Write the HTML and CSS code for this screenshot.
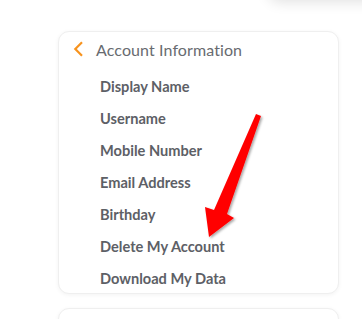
FILE: index.html
```html
<!DOCTYPE html>
<html>
<head>
<meta charset="utf-8">
<link rel="stylesheet" href="styles.css">
</head>
<body>
<div class="menu-shadow"></div>
<main class="page">
  <section class="card">
    <div class="card-head">
      <svg class="chev" width="11" height="16" viewBox="0 0 11 16"><path d="M9 1.3 L2.3 8 L9 14.7" fill="none" stroke="#f7931e" stroke-width="2.2"/></svg>
      <span class="title">Account Information</span>
    </div>
    <ul class="items">
      <li>Display Name</li>
      <li>Username</li>
      <li>Mobile Number</li>
      <li>Email Address</li>
      <li>Birthday</li>
      <li>Delete My Account</li>
      <li>Download My Data</li>
    </ul>
  </section>
  <section class="card card-next"></section>
</main>
<svg class="arrow" width="362" height="319" viewBox="0 0 362 319">
  <defs>
    <filter id="sh" x="-20%" y="-20%" width="140%" height="140%">
      <feDropShadow dx="1.5" dy="1.5" stdDeviation="1.2" flood-color="#000" flood-opacity="0.35"/>
    </filter>
  </defs>
  <polygon points="256,114 261,116 227,214 234,218 209,237 205,207 214,210" fill="#ff0000" filter="url(#sh)"/>
</svg>
</body>
</html>
```
FILE: styles.css
```css
html, body {
  margin: 0;
  padding: 0;
  background: #ffffff;
  overflow: hidden;
  width: 362px;
  height: 319px;
}
body {
  font-family: Lato, "Open Sans", "Liberation Sans", sans-serif;
  color: #5f6164;
}
.menu-shadow {
  position: absolute;
  left: 268px;
  top: -40px;
  width: 140px;
  height: 40px;
  background: #fff;
  box-shadow: 0 2px 14px rgba(0,0,0,0.12);
  border-radius: 12px;
}
.page {
  padding: 31px 0 0 58px;
  display: flex;
  flex-direction: column;
  gap: 14px;
}
.card {
  box-sizing: border-box;
  width: 281px;
  background: #fff;
  border: 1px solid #efefef;
  border-radius: 11px;
  box-shadow: 0 1px 4px rgba(0,0,0,0.05);
}
.card-head {
  display: flex;
  align-items: center;
  height: 24px;
  margin-top: 5px;
  margin-bottom: 2px;
  padding-left: 14px;
}
.chev {
  display: block;
  margin-right: 12px;
}
.title {
  font-size: 16px;
  color: #686b70;
  letter-spacing: 0.1px;
}
.items {
  list-style: none;
  margin: 10px 0 0 0;
  padding: 0 0 0 41px;
}
.items li {
  height: 32px;
  line-height: 32px;
  font-size: 14.6px;
  font-weight: 700;
  color: #5d6066;
}
.items li:last-child {
  height: 30px;
}
.card-next {
  height: 40px;
}
.arrow {
  position: absolute;
  left: 0;
  top: 0;
  pointer-events: none;
}
```
